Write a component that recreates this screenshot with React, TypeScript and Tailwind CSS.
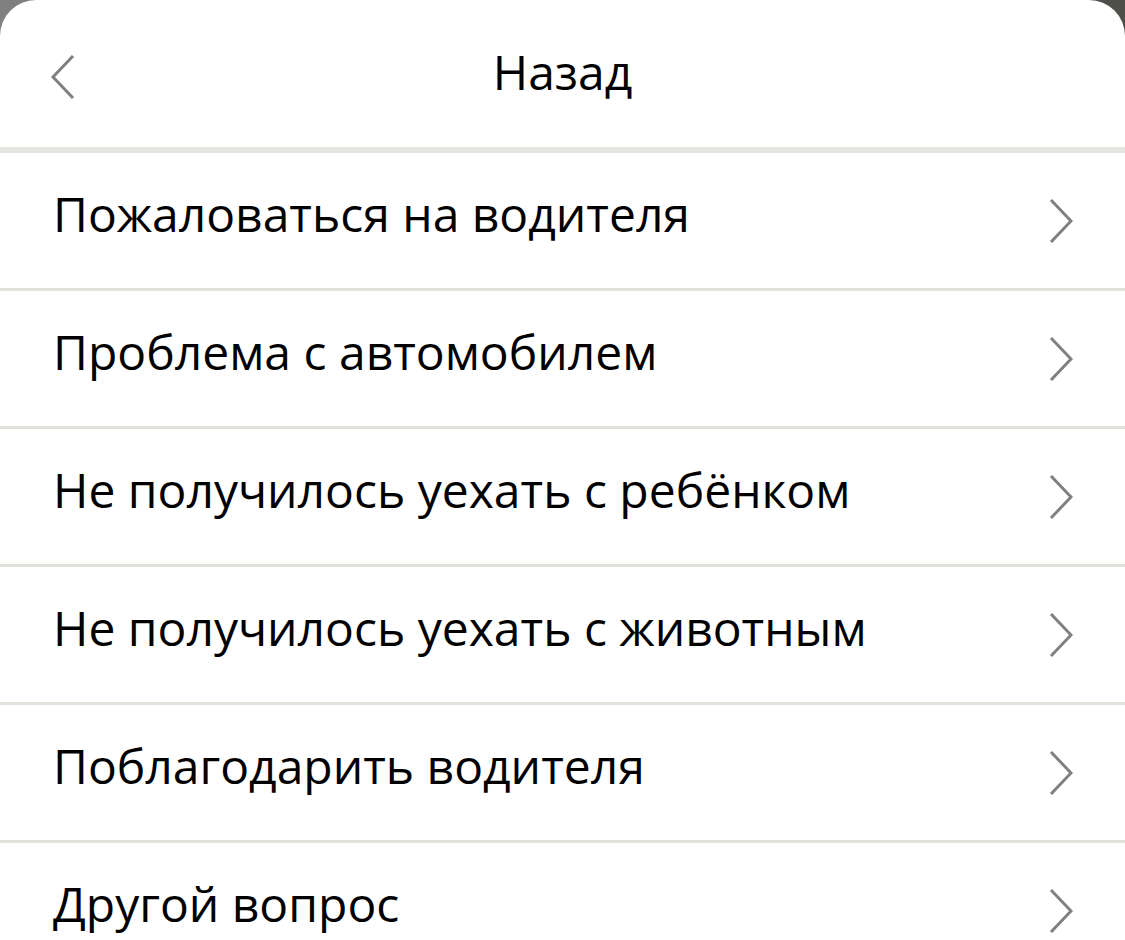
const items = [
  "Пожаловаться на водителя",
  "Проблема с автомобилем",
  "Не получилось уехать с ребёнком",
  "Не получилось уехать с животным",
  "Поблагодарить водителя",
  "Другой вопрос",
];

function Chevron({ dir }: { dir: "left" | "right" }) {
  return (
    <svg width="24" height="44" viewBox="0 0 24 44" fill="none">
      <path
        d={dir === "left" ? "M22 1 L2 22 L22 43" : "M2 1 L22 22 L2 43"}
        stroke="#808080"
        strokeWidth="3"
      />
    </svg>
  );
}

export default function App() {
  return (
    <div className="h-[940px] w-[1125px] overflow-hidden bg-gradient-to-r from-[#808080] to-[#4f4f4a]">
      <div
        className="h-full rounded-t-[36px] bg-white"
        style={{ fontFamily: "'Open Sans', 'Noto Sans', sans-serif" }}
      >
        <div className="relative flex h-[147px] items-center justify-center">
          <div className="absolute left-[51px] top-[55px]">
            <Chevron dir="left" />
          </div>
          <span className="-mt-1 text-[48px] text-black">Назад</span>
        </div>
        <div className="h-[6px] bg-[#e5e5e1]" />
        <ul>
          {items.map((t) => (
            <li
              key={t}
              className="flex h-[138px] items-center justify-between border-b-[3px] border-[#e2e2dc] pl-[53px] pr-[52px]"
            >
              <span className="-mt-[14px] text-[48px] leading-none text-black">{t}</span>
              <Chevron dir="right" />
            </li>
          ))}
        </ul>
      </div>
    </div>
  );
}
